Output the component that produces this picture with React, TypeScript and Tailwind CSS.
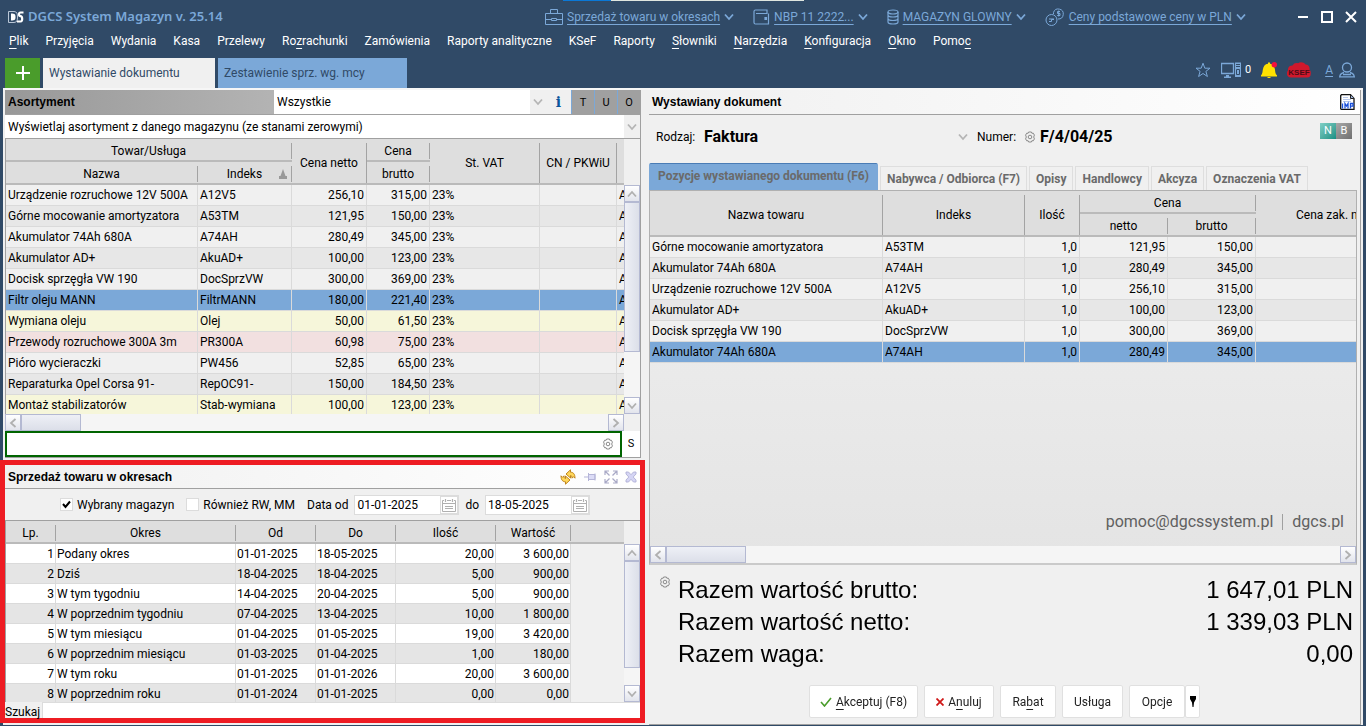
import React from 'react';
import clsx from 'clsx';

type IconProps = { className?: string };

const Chevron: React.FC<IconProps> = ({ className }) => (
  <svg viewBox="0 0 10 8" className={clsx('h-2 w-2.5', className)} fill="none" stroke="currentColor" strokeWidth="1.8">
    <path d="M1 1.5 5 6l4-4.5" />
  </svg>
);

const Gear: React.FC<IconProps> = ({ className }) => (
  <svg viewBox="0 0 12 12" className={clsx('h-3 w-3 text-[#8a8a8a]', className)} fill="none" stroke="currentColor">
    <path d="M4.6 1h2.8l.5 1.300 1.400-.100 1.100 1.900-.700 1.900.700 1.900-1.100 1.900-1.400-.100-.500 1.300H4.600l-.500-1.300-1.400.100-1.100-1.900L2.300 6l-.700-1.900 1.100-1.900 1.400.100z" />
    <circle cx="6" cy="6" r="1.8" />
  </svg>
);

const Briefcase = () => (
  <svg viewBox="0 0 18 16" className="h-4 w-[18px]" fill="none" stroke="currentColor">
    <path d="M.5 4.500h17v11H.500zM5.500 4.500v-4h7v4M.500 10.500h6M11.500 10.500h6M6.500 9.500h5v2h-5z" />
  </svg>
);

const Wallet = () => (
  <svg viewBox="0 0 17 16" className="h-4 w-[17px]" fill="none" stroke="currentColor" strokeWidth="1.200">
    <path d="M15.500 4.500V15h-13A1.500 1.500 0 0 1 1 13.500V2.500A1.500 1.500 0 0 1 2.500 1H14v3.500H3" />
    <path d="M12 8.500h1.500v2H12z" fill="currentColor" />
  </svg>
);

const Database = () => (
  <svg viewBox="0 0 12 16" className="h-4 w-3" fill="none" stroke="currentColor" strokeWidth="1.200">
    <ellipse cx="6" cy="3" rx="5" ry="2" />
    <path d="M1 3v3c0 1 2 2 5 2s5-1 5-2V3M1 6.500V9.500c0 1 2 2 5 2s5-1 5-2v-3M1 10v3c0 1 2 2 5 2s5-1 5-2v-3" />
  </svg>
);

const Coins = () => (
  <svg viewBox="0 0 20 20" className="h-5 w-5" fill="none" stroke="currentColor">
    <circle cx="6.500" cy="13" r="5.500" />
    <path d="M8.500 5.500a5 5 0 1 1 4.500 6.500M8.500 5.500V7" />
    <path d="M15 4.500h-2.500v2H15v2h-2.800M13.700 3.500v6M4 12h5M4 14.500h2.500v-2H9" />
  </svg>
);

const Computer = () => (
  <svg viewBox="0 0 20 16" className="h-4 w-5" fill="none" stroke="currentColor">
    <path d="M.5 1.500h12v10H.500z" strokeWidth="1.300" />
    <path d="M5 13h3v1.500h2V16H3v-1.500h2z" fill="currentColor" stroke="none" />
    <path d="M14 .5h6V15h-6z" fill="currentColor" stroke="none" />
    <path d="M15 2.500h4M15 4.500h4M15.500 7.500h3v5h-3z" stroke="#304a67" />
    <path d="M17 8v3" />
  </svg>
);

const Star = () => (
  <svg viewBox="0 0 16 16" className="h-4 w-4" fill="none" stroke="currentColor">
    <path d="m8 1.200 1.800 5h5.200l-4.100 3.200 1.500 5.100L8 11.500l-4.400 3 1.500-5.100L1 6.200h5.200z" />
  </svg>
);

const Bell = () => (
  <svg viewBox="0 0 16 16" className="h-4 w-4">
    <path d="M0 14.500v-1.200c1.500-1.300 1.500-3.300 1.800-5.500C2.300 4.500 4 2 7 1.800V.5h2v1.300c3 .2 4.500 2.700 5 6 .2 2.200.3 4.200 2 5.500v1.200zM6 15h4l-1 1H7z" fill="#ffe100" />
    <circle cx="13.300" cy="2.700" r="2.700" fill="#f5103c" />
  </svg>
);

const KsefCloud = () => (
  <svg viewBox="0 0 24 16" className="h-4 w-6">
    <path d="M4 15.500C1 15.500 0 13.500 0 12c0-1.500 0-2.500 1-3.500-.500-3 1.500-5 4.500-5C7 1 9 .5 11 1.200c2-1.500 6-1.200 7.500 1.300 3 0 4.500 2.500 4 5 1 1 1.500 2.500 1.200 4.500 0 2-1 3.500-3.700 3.500z" fill="#d0182c" />
    <text x="12" y="13" textAnchor="middle" fontSize="8" fontWeight="700" fontFamily="Liberation Sans, sans-serif" fill="#4a0c16">KSEF</text>
  </svg>
);

const UserIcon = () => (
  <svg viewBox="0 0 16 16" className="h-4 w-4" fill="none" stroke="currentColor" strokeWidth="1.300">
    <circle cx="8" cy="5.500" r="4.500" />
    <path d="M5 10.500c-2.500.5-4 2-4.300 4.300h14.600c-.3-2.300-1.800-3.800-4.300-4.300M4 12.500h8" />
  </svg>
);

const Calendar = () => (
  <svg viewBox="0 0 14 14" className="h-3.5 w-3.5" fill="none" stroke="#b0b0b0">
    <path d="M2 2.500H.5v11h13v-11H12M5 2.500h4M.5 5.500h13M3 8.500h8M3 10.500h8" />
    <path d="M3.500 1v3M10.500 1v3" strokeWidth="1.200" />
  </svg>
);

const Refresh = () => (
  <svg viewBox="0 0 16 16" className="h-4 w-4" fill="#ffd75a" stroke="#b87a10" strokeWidth=".9">
    <path d="M6 5 10.500.8v2.400c2.500 0 4.500 1.500 4.500 6l-1.500-1.500-1.500 1.500c0-2-.5-2.700-1.500-2.700V9z" />
    <path d="M10 11l-4.500 4.200v-2.400c-2.500 0-4.500-1.500-4.500-6l1.500 1.500L4 6.800c0 2 .5 2.700 1.500 2.700V7z" />
  </svg>
);

const Pin = () => (
  <svg viewBox="0 0 14 12" className="h-3 w-3.5" fill="#dcdcf6" stroke="#b5b5d8">
    <path d="M1 6h4M5.500 2v8M5.500 3.500H12v5H5.500M12 2.500v7" />
  </svg>
);

const Expand = () => (
  <svg viewBox="0 0 14 14" className="h-3.5 w-3.5" fill="none" stroke="#a9a9c6" strokeWidth="1.200">
    <path d="M1 5V1h4M9 1h4v4M13 9v4H9M5 13H1V9M1.500 1.500 5.500 5.500M12.500 1.500l-4 4M12.500 12.500l-4-4M1.500 12.500l4-4" />
  </svg>
);

const PanelClose = () => (
  <svg viewBox="0 0 12 12" className="h-3 w-3" fill="#d5d5f4" stroke="#b0b0d6" strokeWidth=".9">
    <path d="M1 1h2.500L6 3.700 8.500 1H11v2L8.200 6 11 9v2H8.500L6 8.300 3.500 11H1V9l2.800-3L1 3z" />
  </svg>
);

const ImpFile = () => (
  <svg viewBox="0 0 15 16" className="h-4 w-[15px]">
    <path d="M1.500.7h9L14 4.500v10.800H1.500A.7.7 0 0 1 .7 14.500V1.500z" fill="#fff" stroke="#111" strokeWidth="1.300" />
    <path d="M10.500 1v3.500H14" fill="#9fb6e0" stroke="#222" />
    <path d="M3 3.500h5M3 5.500h8M3 7.500h8" stroke="#b9c9ec" />
    <path d="M2.500 14.500v-5M5 14.500v-5l1.500 2.500L8 9.500v5M10.500 14.500v-5H13v2.700h-2.500" fill="none" stroke="#1a4fd8" strokeWidth="1.300" />
  </svg>
);

// text with one underlined access key
const Mnemonic: React.FC<{ text: string; at?: number }> = ({ text, at }) => {
  if (at === undefined) return <>{text}</>;
  return (
    <>
      {text.slice(0, at)}
      <span className="underline underline-offset-3">{text[at]}</span>
      {text.slice(at + 1)}
    </>
  );
};

const menu: { text: string; at?: number }[] = [
  { text: 'Plik', at: 0 },
  { text: 'Przyjęcia' },
  { text: 'Wydania' },
  { text: 'Kasa' },
  { text: 'Przelewy' },
  { text: 'Rozrachunki', at: 2 },
  { text: 'Zamówienia' },
  { text: 'Raporty analityczne' },
  { text: 'KSeF' },
  { text: 'Raporty' },
  { text: 'Słowniki', at: 0 },
  { text: 'Narzędzia', at: 0 },
  { text: 'Konfiguracja', at: 0 },
  { text: 'Okno', at: 0 },
  { text: 'Pomoc', at: 4 },
];

const ContextLink: React.FC<{ icon: React.ReactNode; text: string }> = ({ icon, text }) => (
  <div className="flex items-center gap-1">
    {icon}
    <a href="#" className="underline underline-offset-3">{text}</a>
    <Chevron />
  </div>
);

const Header = () => (
  <header className="flex h-[88px] shrink-0 flex-col bg-[#304a67] text-white">
    <div className="flex h-px shrink-0">
      <div className="w-[41.2%]" />
      <div className="w-12 bg-[#0a78d7]" />
      <div className="w-[193px] bg-[#dfe6e0]" />
    </div>
    <div className="flex h-8 items-center pl-2 pr-[9px] text-[#7ba8d8]">
      <svg viewBox="0 0 16 12" className="h-3 w-4">
        <path d="M.5.500H6C9 .5 9.500 3 9.500 6S9 11.500 6 11.500H.500z" fill="none" stroke="#b9c6d6" />
        <path d="M3 2.500c4 0 4.500 1 4.500 3.500S7 9.500 3 9.500z" fill="#fff" />
        <path d="M15.500 1.500h-3c-2 0-2 3.700 0 3.700s2.500 5.300 0 5.300H9" fill="none" stroke="#fff" strokeWidth="2.200" />
      </svg>
      <h1 className="ml-1 w-[517px] shrink-0 font-['Noto_Sans',sans-serif] text-[13px] font-semibold">DGCS System Magazyn v. 25.14</h1>
      <div className="flex flex-1 items-center gap-[19px] whitespace-nowrap">
        <ContextLink icon={<Briefcase />} text="Sprzedaż towaru w okresach" />
        <ContextLink icon={<Wallet />} text="NBP 11 2222..." />
        <ContextLink icon={<Database />} text="MAGAZYN GLOWNY" />
        <ContextLink icon={<Coins />} text="Ceny podstawowe ceny w PLN" />
      </div>
      <div className="flex items-center gap-3 text-white">
        <button aria-label="Minimalizuj">
          <svg viewBox="0 0 12 12" className="h-3 w-3" stroke="currentColor" strokeWidth="2"><path d="M1 6h10" /></svg>
        </button>
        <button aria-label="Maksymalizuj">
          <svg viewBox="0 0 12 12" className="h-3 w-3" fill="none" stroke="currentColor" strokeWidth="2"><path d="M1 1h10v10H1z" /></svg>
        </button>
        <button aria-label="Zamknij">
          <svg viewBox="0 0 12 12" className="h-3 w-3" stroke="currentColor" strokeWidth="2"><path d="m1 1 10 10M11 1 1 11" /></svg>
        </button>
      </div>
    </div>
    <nav className="flex h-4 items-center gap-[17px] whitespace-nowrap pl-[9px]">
      {menu.map((m) => (
        <button key={m.text}>
          <Mnemonic text={m.text} at={m.at} />
        </button>
      ))}
    </nav>
    <div className="mt-[9px] flex flex-1 pl-[5px] text-[#304a67]">
      <button aria-label="Nowa karta" className="flex w-[35px] items-center justify-center bg-[#4a9c2b]">
        <svg viewBox="0 0 14 14" className="h-3.5 w-3.5" stroke="#fff" strokeWidth="2"><path d="M7 0v14M0 7h14" /></svg>
      </button>
      <button className="ml-[3px] w-[172px] bg-[#f0f0f0] pl-1.5 text-left">Wystawianie dokumentu</button>
      <button className="ml-[3px] w-[189px] bg-[#7ba8d8] pl-1.5 text-left">Zestawienie sprz. wg. mcy</button>
      <div className="ml-auto flex items-center gap-2.5 pr-[11px] pb-1.5 text-[#7ba8d8]">
        <Star />
        <span className="flex items-center gap-1">
          <Computer />
          <span className="text-[11px] text-white">0</span>
        </span>
        <Bell />
        <KsefCloud />
        <span className="ml-1 flex items-center gap-1.5">
          <a href="#" className="underline underline-offset-2">A</a>
          <UserIcon />
        </span>
      </div>
    </div>
  </header>
);

const scrollBtn = 'flex h-[17px] w-4 shrink-0 items-center justify-center border border-[#b4b9d2] bg-linear-to-b from-white to-[#e2e4ec] text-[#b0b0b0]';

const VScroll: React.FC<{ thumb: string }> = ({ thumb }) => (
  <div className="flex w-4 shrink-0 flex-col bg-[#f5f5f5]">
    <button aria-label="W górę" className={scrollBtn}><Chevron className="rotate-180" /></button>
    <div className={clsx('border border-[#b4b9d2] bg-linear-to-r from-[#eef0f6] to-[#dcdfe9]', thumb)} />
    <div className="flex-1" />
    <button aria-label="W dół" className={scrollBtn}><Chevron /></button>
  </div>
);

const HScroll: React.FC<{ thumb: string }> = ({ thumb }) => (
  <div className="flex h-[17px] min-w-0 flex-1 bg-[#f5f5f5]">
    <button aria-label="W lewo" className={scrollBtn}><Chevron className="rotate-90" /></button>
    <div className={clsx('border border-[#b4b9d2] bg-linear-to-b from-[#eef0f6] to-[#dcdfe9]', thumb)} />
    <div className="flex-1" />
    <button aria-label="W prawo" className={scrollBtn}><Chevron className="-rotate-90" /></button>
  </div>
);

type HeadProps = {
  children?: React.ReactNode;
  tall?: boolean;
  last?: boolean;
  span?: number;
};

const Head: React.FC<HeadProps> = ({ children, tall, last, span }) => (
  <th
    rowSpan={tall ? 2 : 1}
    colSpan={span}
    className={clsx('border-b-2 border-[#bababa] bg-[#dedede] px-0 pb-0 font-normal', tall ? 'pt-1' : 'pt-0.5')}
  >
    <div
      className={clsx(
        'relative flex items-center justify-center overflow-hidden whitespace-nowrap',
        tall ? 'h-10' : 'h-4',
        !last && 'border-r border-[#a3a3a3]',
      )}
    >
      {children}
    </div>
  </th>
);

const Cols: React.FC<{ widths: (number | null)[] }> = ({ widths }) => (
  <colgroup>
    {widths.map((w, i) => (
      <col key={i} style={w ? { width: w } : undefined} />
    ))}
  </colgroup>
);

const cell = 'h-[21px] overflow-hidden whitespace-nowrap border-r border-b border-[#dadada] px-0.5 py-0 last:border-r-0';

type Product = [string, string, string, string, string?];

const products: Product[] = [
  ['Urządzenie rozruchowe 12V 500A', 'A12V5', '256,10', '315,00'],
  ['Górne mocowanie amortyzatora', 'A53TM', '121,95', '150,00'],
  ['Akumulator 74Ah 680A', 'A74AH', '280,49', '345,00'],
  ['Akumulator AD+', 'AkuAD+', '100,00', '123,00'],
  ['Docisk sprzęgła VW 190', 'DocSprzVW', '300,00', '369,00'],
  ['Filtr oleju MANN', 'FiltrMANN', '180,00', '221,40', 'bg-[#7ba8d8]'],
  ['Wymiana oleju', 'Olej', '50,00', '61,50', 'bg-[#f6f6da]'],
  ['Przewody rozruchowe 300A 3m', 'PR300A', '60,98', '75,00', 'bg-[#f2e0e0]'],
  ['Pióro wycieraczki', 'PW456', '52,85', '65,00'],
  ['Reparaturka Opel Corsa 91-', 'RepOC91-', '150,00', '184,50'],
  ['Montaż stabilizatorów', 'Stab-wymiana', '100,00', '123,00', 'bg-[#f6f6da]'],
];

const stripe = (i: number) => (i % 2 ? 'bg-[#e7e7e7]' : 'bg-[#f0f0f0]');

const ProductPanel = () => (
  <section className="flex min-h-0 flex-1 flex-col border-r border-b border-[#a0a0a0]">
    <div className="flex h-[25px] shrink-0 border-b border-[#a0a0a0] bg-linear-to-r from-[#989898] to-[#dadada]">
      <h2 className="flex w-[269px] items-center pl-[3px] font-['Liberation_Sans',sans-serif] font-bold">Asortyment</h2>
      <div className="relative flex-1 bg-white">
        <select aria-label="Filtr asortymentu" className="h-full w-full appearance-none px-[3px]">
          <option>Wszystkie</option>
        </select>
        <span className="pointer-events-none absolute inset-y-0 right-0 flex w-4 items-center justify-center bg-[#f0f0f0] text-[#b5b5b5]"><Chevron /></span>
      </div>
      <button aria-label="Informacje" className="w-[25px] bg-[#f0f0f0] font-['DejaVu_Serif',serif] text-sm font-bold text-[#0a569c]">i</button>
      {['T', 'U', 'O'].map((t) => (
        <button key={t} className="w-[23px] border-l border-[#7ba8d8] bg-[#a0a0a0] pt-0.5 text-[11px]">{t}</button>
      ))}
    </div>
    <div className="relative h-6 shrink-0 border-b border-[#a0a0a0] bg-white">
      <select aria-label="Zakres asortymentu" className="h-full w-full appearance-none px-[3px]">
        <option>Wyświetlaj asortyment z danego magazynu (ze stanami zerowymi)</option>
      </select>
      <span className="pointer-events-none absolute inset-y-0 right-0 flex w-4 items-center justify-center bg-[#f0f0f0] text-[#b5b5b5]"><Chevron /></span>
    </div>
    <div className="flex min-h-0 flex-1 border-l border-[#a0a0a0]">
      <div className="min-w-0 flex-1 overflow-hidden">
        <table className="w-full table-fixed border-separate border-spacing-0">
          <Cols widths={[192, 94, 75, 63, 110, 77, null]} />
          <thead>
            <tr className="h-[23px]">
              <Head span={2}>Towar/Usługa</Head>
              <Head tall>Cena netto</Head>
              <Head>Cena</Head>
              <Head tall>St. VAT</Head>
              <Head tall>CN / PKWiU</Head>
              <Head tall last />
            </tr>
            <tr className="h-[23px]">
              <Head>Nazwa</Head>
              <Head>
                Indeks
                <svg viewBox="0 0 8 10" className="absolute right-1 h-2.5 w-2" fill="#999"><path d="M4 0 6.500 7H8v3H0V7h1.500z" /></svg>
              </Head>
              <Head>brutto</Head>
            </tr>
          </thead>
          <tbody>
            {products.map(([name, index, net, gross, tone], i) => (
              <tr key={index} className={tone ?? stripe(i)}>
                <td className={cell}>{name}</td>
                <td className={cell}>{index}</td>
                <td className={clsx(cell, 'text-right')}>{net}</td>
                <td className={clsx(cell, 'text-right')}>{gross}</td>
                <td className={cell}>23%</td>
                <td className={cell} />
                <td className={cell}>A</td>
              </tr>
            ))}
          </tbody>
        </table>
      </div>
      <div className="flex pt-[46px]"><VScroll thumb="h-[150px]" /></div>
    </div>
    <div className="flex h-[17px] shrink-0 pr-4"><HScroll thumb="w-[60px]" /></div>
    <div className="flex h-[26px] shrink-0 bg-white">
      <div className="flex flex-1 items-center border-2 border-[#006400] pr-1.5">
        <input aria-label="Wyszukaj towar" autoFocus className="min-w-0 flex-1 self-stretch px-px outline-none" />
        <button aria-label="Ustawienia wyszukiwania"><Gear /></button>
      </div>
      <button className="w-[18px] bg-white text-[11px]">S</button>
    </div>
  </section>
);

const periods = [
  ['1', 'Podany okres', '01-01-2025', '18-05-2025', '20,00', '3 600,00'],
  ['2', 'Dziś', '18-04-2025', '18-04-2025', '5,00', '900,00'],
  ['3', 'W tym tygodniu', '14-04-2025', '20-04-2025', '5,00', '900,00'],
  ['4', 'W poprzednim tygodniu', '07-04-2025', '13-04-2025', '10,00', '1 800,00'],
  ['5', 'W tym miesiącu', '01-04-2025', '01-05-2025', '19,00', '3 420,00'],
  ['6', 'W poprzednim miesiącu', '01-03-2025', '01-04-2025', '1,00', '180,00'],
  ['7', 'W tym roku', '01-01-2025', '01-01-2026', '20,00', '3 600,00'],
  ['8', 'W poprzednim roku', '01-01-2024', '01-01-2025', '0,00', '0,00'],
];

const Check: React.FC<{ label: string; checked?: boolean }> = ({ label, checked }) => (
  <label className="flex items-center gap-1">
    <span className="relative flex">
      <input type="checkbox" defaultChecked={checked} className="peer h-[13px] w-[13px] appearance-none border border-[#dcdcdc] bg-white" />
      <svg viewBox="0 0 13 13" className="pointer-events-none absolute inset-0 hidden h-[13px] w-[13px] peer-checked:block" fill="none" stroke="#000" strokeWidth="2">
        <path d="m3 6 2.500 3L10 3.500" />
      </svg>
    </span>
    {label}
  </label>
);

const DateField: React.FC<{ label: string; value: string }> = ({ label, value }) => (
  <div className="flex items-center gap-1.5">
    <label htmlFor={value}>{label}</label>
    <span className="flex h-5 w-[105px] items-center border border-[#dcdcdc] bg-white">
      <input id={value} defaultValue={value} className="w-full min-w-0 pl-0.5 outline-none" />
      <button aria-label="Kalendarz" className="flex h-[18px] w-[18px] shrink-0 items-center justify-center border border-[#dcdcdc]"><Calendar /></button>
    </span>
  </div>
);

const SalesPanel = () => (
  <section className="-ml-[5px] -mr-1 mt-0.5 flex shrink-0 flex-col border-5 border-[#ee1c23] bg-[#f0f0f0]">
    <div className="flex h-6 items-center border-b border-[#a0a0a0] bg-linear-to-r from-[#f0f0f0] to-white pr-[3px] pl-[3px]">
      <h2 className="flex-1 font-['Liberation_Sans',sans-serif] font-bold">Sprzedaż towaru w okresach</h2>
      <div className="flex items-center gap-[7px]">
        <button aria-label="Odśwież"><Refresh /></button>
        <button aria-label="Przypnij"><Pin /></button>
        <button aria-label="Powiększ"><Expand /></button>
        <button aria-label="Zamknij panel"><PanelClose /></button>
      </div>
    </div>
    <div className="flex h-[31px] items-center gap-3 whitespace-nowrap pl-[55px]">
      <Check label="Wybrany magazyn" checked />
      <Check label="Również RW, MM" />
      <div className="flex gap-1.5">
        <DateField label="Data od" value="01-01-2025" />
        <DateField label="do" value="18-05-2025" />
      </div>
    </div>
    <div className="flex h-[182px] border-t border-l border-[#a0a0a0]">
      <div className="min-w-0 flex-1 overflow-hidden">
        <table className="w-full table-fixed border-separate border-spacing-0">
          <Cols widths={[50, 180, 80, 80, 100, 75, null]} />
          <thead>
            <tr className="h-[23px]">
              <Head>Lp.</Head>
              <Head>Okres</Head>
              <Head>Od</Head>
              <Head>Do</Head>
              <Head>Ilość</Head>
              <Head>Wartość</Head>
              <Head last />
            </tr>
          </thead>
          <tbody>
            {periods.map((row, i) => (
              <tr key={row[0]} className={i % 2 ? 'bg-[#e5e5e5]' : 'bg-white'}>
                {row.map((value, c) => (
                  <td
                    key={c}
                    className={clsx('h-5 whitespace-nowrap border-r border-b border-[#dadada] px-px py-0', (c === 0 || c > 3) && 'text-right')}
                  >
                    {value}
                  </td>
                ))}
                <td className="bg-[#f0f0f0] p-0" />
              </tr>
            ))}
          </tbody>
        </table>
      </div>
      <div className="flex pt-[23px]"><VScroll thumb="h-[107px]" /></div>
    </div>
    <div className="flex h-4">
      <label htmlFor="search" className="pt-0.5 leading-4">Szukaj</label>
      <input id="search" className="ml-0.5 min-w-0 flex-1 border-t border-l border-[#dcdcdc] bg-white px-0.5 outline-none" />
    </div>
  </section>
);

const docItems = [
  ['Górne mocowanie amortyzatora', 'A53TM', '121,95', '150,00'],
  ['Akumulator 74Ah 680A', 'A74AH', '280,49', '345,00'],
  ['Urządzenie rozruchowe 12V 500A', 'A12V5', '256,10', '315,00'],
  ['Akumulator AD+', 'AkuAD+', '100,00', '123,00'],
  ['Docisk sprzęgła VW 190', 'DocSprzVW', '300,00', '369,00'],
  ['Akumulator 74Ah 680A', 'A74AH', '280,49', '345,00'],
];

const docTabs = ['Nabywca / Odbiorca (F7)', 'Opisy', 'Handlowcy', 'Akcyza', 'Oznaczenia VAT'];

const totals = [
  ['Razem wartość brutto:', '1 647,01 PLN'],
  ['Razem wartość netto:', '1 339,03 PLN'],
  ['Razem waga:', '0,00'],
];

const actionBtn = 'flex h-[33px] items-center justify-center whitespace-nowrap rounded-xs border border-[#e0e0e0] bg-white pt-0.5 text-[#222]';

const DocumentPanel = () => (
  <section className="flex min-w-0 flex-col border-r border-b border-[#a0a0a0]">
    <div className="flex h-[25px] shrink-0 items-center border-b border-[#a0a0a0] bg-linear-to-r from-[#f0f0f0] to-white pr-[5px] pl-[3px]">
      <h2 className="flex-1 font-['Liberation_Sans',sans-serif] font-bold">Wystawiany dokument</h2>
      <button aria-label="Importuj"><ImpFile /></button>
    </div>
    <div className="flex h-12 shrink-0 pt-2 pr-2 pl-[7px]">
      <div className="flex h-7 flex-1 items-center">
        <label htmlFor="kind" className="w-12">Rodzaj:</label>
        <div className="relative w-[270px]">
          <select id="kind" className="w-full appearance-none text-base font-bold">
            <option>Faktura</option>
          </select>
          <Chevron className="pointer-events-none absolute top-2 right-1.5 text-[#b5b5b5]" />
        </div>
        <label htmlFor="number" className="ml-[3px]">Numer:</label>
        <button aria-label="Ustawienia numeru" className="ml-2"><Gear /></button>
        <input id="number" defaultValue="F/4/04/25" className="ml-1 w-40 text-base font-bold outline-none" />
      </div>
      <div className="flex h-4 text-[11px] text-white">
        <button className="w-4 bg-linear-to-br from-[#7fd0c6] to-[#109084]">N</button>
        <button className="w-4 bg-linear-to-br from-[#a8a8a8] to-[#707070]">B</button>
      </div>
    </div>
    <div className="flex h-[27px] shrink-0 items-end gap-0.5 font-bold text-[#6a6a6a]" role="tablist">
      <button role="tab" aria-selected="true" className="h-[27px] w-[229px] whitespace-nowrap rounded-t-xs border border-b-0 border-t-[#4a7cb5] border-x-[#7ba8d8] bg-[#7ba8d8] pb-0.5">
        Pozycje wystawianego dokumentu (F6)
      </button>
      {docTabs.map((t) => (
        <button key={t} role="tab" aria-selected="false" className="h-6 whitespace-nowrap border border-b-0 border-[#dedede] px-1.5">{t}</button>
      ))}
    </div>
    <div className="mr-[3px] flex min-h-0 flex-1 flex-col overflow-hidden border border-b-2 border-[#b0b0b0] border-b-[#cacaca] bg-linear-to-b from-[#f0f0f0] to-[#e4e4e4]">
      <table className="w-full table-fixed border-separate border-spacing-0">
        <Cols widths={[233, 142, 55, 88, 88, null]} />
        <thead>
          <tr className="h-[23px]">
            <Head tall>Nazwa towaru</Head>
            <Head tall>Indeks</Head>
            <Head tall>Ilość</Head>
            <Head span={2}>Cena</Head>
            <Head tall last><span className="w-full pl-10 text-left">Cena zak. netto</span></Head>
          </tr>
          <tr className="h-[23px]">
            <Head>netto</Head>
            <Head>brutto</Head>
          </tr>
        </thead>
        <tbody>
          {docItems.map(([name, index, net, gross], i) => (
            <tr key={i} className={i === docItems.length - 1 ? 'bg-[#7ba8d8]' : stripe(i)}>
              <td className={cell}>{name}</td>
              <td className={cell}>{index}</td>
              <td className={clsx(cell, 'text-right')}>1,0</td>
              <td className={clsx(cell, 'text-right')}>{net}</td>
              <td className={clsx(cell, 'text-right')}>{gross}</td>
              <td className={cell} />
            </tr>
          ))}
        </tbody>
      </table>
      <div className="flex min-h-0 flex-1 items-end justify-end gap-[9px] px-3 pb-3 text-base text-[#606060]">
        <a href="#">pomoc@dgcssystem.pl</a>
        <span className="mb-1 h-4 border-l border-[#a0a0a0]" />
        <a href="#">dgcs.pl</a>
      </div>
      <div className="flex shrink-0"><HScroll thumb="w-20" /></div>
    </div>
    <div className="flex h-[109px] shrink-0 items-start gap-[7px] pt-[9px] pr-[7px] pl-2.5">
      <button aria-label="Ustawienia podsumowania" className="flex pt-0.5"><Gear /></button>
      <dl className="flex-1 font-['Liberation_Sans',sans-serif] text-2xl">
        {totals.map(([name, value]) => (
          <div key={name} className="flex justify-between">
            <dt>{name}</dt>
            <dd>{value}</dd>
          </div>
        ))}
      </dl>
    </div>
    <div className="flex h-[50px] shrink-0 items-center justify-center gap-1.5 pt-1">
      <button className={clsx(actionBtn, 'w-[109px] gap-1')}>
        <svg viewBox="0 0 12 10" className="h-2.5 w-3" fill="none" stroke="#4a9c2b" strokeWidth="1.600"><path d="m1 5 3.500 4L11 1" /></svg>
        <span><Mnemonic text="Akceptuj (F8)" at={0} /></span>
      </button>
      <button className={clsx(actionBtn, 'w-[70px] gap-1')}>
        <svg viewBox="0 0 8 8" className="h-2 w-2" stroke="#d01818" strokeWidth="1.800"><path d="m.5.500 7 7M7.500.500l-7 7" /></svg>
        <span><Mnemonic text="Anuluj" at={1} /></span>
      </button>
      <button className={clsx(actionBtn, 'w-14')}><span><Mnemonic text="Rabat" at={2} /></span></button>
      <button className={clsx(actionBtn, 'w-[61px]')}>Usługa</button>
      <div className="flex">
        <button className={clsx(actionBtn, 'w-14')}>Opcje</button>
        <button aria-label="Więcej opcji" className="flex h-[33px] w-[15px] items-center justify-center rounded-xs border border-[#e0e0e0] bg-white">
          <svg viewBox="0 0 6 11" className="h-[11px] w-1.5"><path d="M0 0h6v3L4 6.500 3.500 11h-1L2 6.500 0 3z" /></svg>
        </button>
      </div>
    </div>
  </section>
);

const App: React.FC = () => (
  <div className="flex h-screen flex-col overflow-hidden bg-[#304a67] font-[Roboto,sans-serif] text-xs text-black">
    <Header />
    <main className="mr-[3px] ml-[3px] mb-px grid min-h-0 flex-1 grid-cols-[640fr_712fr] gap-1 border-t-2 border-[#f6f6f6] bg-[#f0f0f0] px-0.5">
      <div className="flex min-h-0 min-w-0 flex-col pr-1 pb-0.5">
        <ProductPanel />
        <SalesPanel />
      </div>
      <DocumentPanel />
    </main>
  </div>
);

export default App;
